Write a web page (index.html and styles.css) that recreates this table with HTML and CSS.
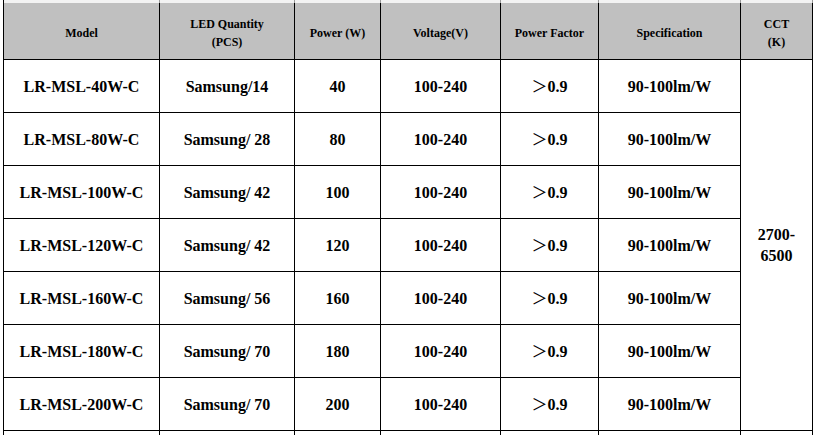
FILE: index.html
```html
<!DOCTYPE html>
<html lang="en">
<head>
<meta charset="utf-8">
<title>LR-MSL Specification</title>
<link rel="stylesheet" href="styles.css">
</head>
<body>
<div class="sheet">
  <table class="spec">
    <colgroup>
      <col class="c-model">
      <col class="c-led">
      <col class="c-power">
      <col class="c-volt">
      <col class="c-pf">
      <col class="c-spec">
      <col class="c-cct">
    </colgroup>
    <tbody>
      <tr class="strip"><td></td><td></td><td></td><td></td><td></td><td></td><td></td></tr>
      <tr class="head">
        <th>Model</th>
        <th>LED Quantity<br>(PCS)</th>
        <th>Power (W)</th>
        <th>Voltage(V)</th>
        <th>Power Factor</th>
        <th>Specification</th>
        <th>CCT<br>(K)</th>
      </tr>
      <tr class="row">
        <td>LR-MSL-40W-C</td>
        <td>Samsung/14</td>
        <td>40</td>
        <td>100-240</td>
        <td><span class="gt">＞</span>0.9</td>
        <td>90-100lm/W</td>
        <td class="cct" rowspan="7">2700-<br>6500</td>
      </tr>
      <tr class="row">
        <td>LR-MSL-80W-C</td>
        <td>Samsung/ 28</td>
        <td>80</td>
        <td>100-240</td>
        <td><span class="gt">＞</span>0.9</td>
        <td>90-100lm/W</td>
      </tr>
      <tr class="row">
        <td>LR-MSL-100W-C</td>
        <td>Samsung/ 42</td>
        <td>100</td>
        <td>100-240</td>
        <td><span class="gt">＞</span>0.9</td>
        <td>90-100lm/W</td>
      </tr>
      <tr class="row">
        <td>LR-MSL-120W-C</td>
        <td>Samsung/ 42</td>
        <td>120</td>
        <td>100-240</td>
        <td><span class="gt">＞</span>0.9</td>
        <td>90-100lm/W</td>
      </tr>
      <tr class="row">
        <td>LR-MSL-160W-C</td>
        <td>Samsung/ 56</td>
        <td>160</td>
        <td>100-240</td>
        <td><span class="gt">＞</span>0.9</td>
        <td>90-100lm/W</td>
      </tr>
      <tr class="row">
        <td>LR-MSL-180W-C</td>
        <td>Samsung/ 70</td>
        <td>180</td>
        <td>100-240</td>
        <td><span class="gt">＞</span>0.9</td>
        <td>90-100lm/W</td>
      </tr>
      <tr class="row">
        <td>LR-MSL-200W-C</td>
        <td>Samsung/ 70</td>
        <td>200</td>
        <td>100-240</td>
        <td><span class="gt">＞</span>0.9</td>
        <td>90-100lm/W</td>
      </tr>
      <tr class="row tail"><td></td><td></td><td></td><td></td><td></td><td></td><td></td></tr>
    </tbody>
  </table>
</div>
</body>
</html>
```
FILE: styles.css
```css
html, body {
  margin: 0;
  padding: 0;
  background: #ffffff;
  overflow: hidden;
  height: 435px;
}

.sheet {
  padding-left: 3px;
}

.spec {
  border-collapse: separate;
  border-spacing: 0;
  table-layout: fixed;
  width: 810px;
  border-left: 1px solid #000;
  font-family: "Liberation Serif", "Times New Roman", serif;
  font-weight: bold;
  color: #000;
}

.c-model { width: 156px; }
.c-led { width: 135px; }
.c-power { width: 86px; }
.c-volt { width: 120px; }
.c-pf { width: 98px; }
.c-spec { width: 142px; }
.c-cct { width: 72px; }

.spec th,
.spec td {
  padding: 0;
  text-align: center;
  vertical-align: middle;
  border-right: 1px solid #000;
  border-bottom: 1px solid #000;
}

.strip {
  height: 3px;
}

.strip td {
  background: #f3f3f3;
  border-bottom: none;
  border-right-color: #9a9a9a;
  font-size: 0;
  line-height: 0;
}

.head {
  height: 57px;
}

.head th {
  background: #c0c0c0;
  font-size: 12px;
  line-height: 18px;
  padding-top: 3px;
}

.row {
  height: 53px;
}

.row td {
  font-size: 16px;
  line-height: 21px;
}

.cct {
  padding-bottom: 2px;
}

.gt {
  font-family: "Noto Sans CJK SC", sans-serif;
  font-weight: 400;
  font-size: 16px;
}

.tail {
  height: 20px;
}
```
